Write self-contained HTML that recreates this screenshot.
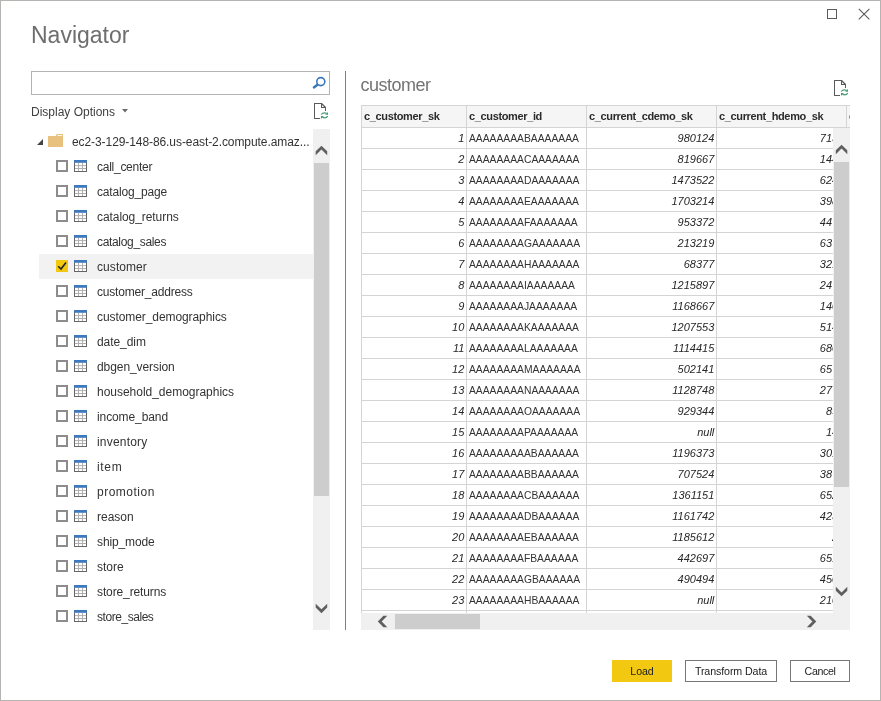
<!DOCTYPE html><html><head><meta charset="utf-8"><title>Navigator</title><style>
*{box-sizing:border-box;margin:0;padding:0}
html,body{width:881px;height:701px;overflow:hidden;background:#fff}
body{font-family:"Liberation Sans",sans-serif;color:#333;position:relative;font-size:12px}
.abs{position:absolute}
#win{position:absolute;left:0;top:0;width:881px;height:701px;border:1px solid #b6b4b1}
.title{position:absolute;left:31px;top:20px;font-size:23px;color:#6e6e6e;line-height:30px}
.search{position:absolute;left:31px;top:71px;width:299px;height:24px;border:1px solid #b3b3b3;background:#fff}
.dispopt{position:absolute;left:31px;top:105px;font-size:12px;line-height:15px;color:#404040}
.tree-row{position:absolute;left:39px;width:274px;height:25px}
.tree-row.sel{background:#f2f2f2}
.tree-row .cb{position:absolute;left:17px;top:6px;width:12px;height:12px;border:2px solid #8c8c8c;background:#fff}
.tree-row.sel .cb{border:none;background:#f2c811}
.tree-row .lbl{position:absolute;left:58px;top:6px;font-size:12px;line-height:15px;color:#333;white-space:nowrap}
.tree-row svg.ti{position:absolute;left:35px;top:6px}
.vsb{position:absolute;background:#f0f0f0}
.thumb{position:absolute;background:#cdcdcd}
.divider{position:absolute;left:345px;top:71px;width:1px;height:559px;background:#7f7f7f}
.ptitle{position:absolute;left:360.6px;top:73px;font-size:18px;letter-spacing:-0.5px;line-height:24px;color:#747474}
.grid{position:absolute;left:361px;top:105px;width:489px;height:508px;overflow:hidden;border-left:1px solid #d4d4d4;border-top:1px solid #d4d4d4}
.grid .r{position:absolute;left:0;height:21px;width:600px}
.grid .c{position:absolute;top:0;height:21px;border-right:1px solid #d4d4d4;border-bottom:1px solid #d4d4d4;font-size:11px;line-height:20px;white-space:nowrap;overflow:hidden;color:#333}
.grid .h,.grid .h .c{height:22px}
.grid .h .c{background:#f5f5f5;line-height:20px;font-weight:bold;font-size:11px;letter-spacing:-0.36px;padding-left:2px;color:#2b2b2b}
.grid .c1{left:0;width:105px;text-align:right;padding-right:1.7px;font-style:italic;color:#262626}
.grid .c2{left:105px;width:120px;padding-left:2px;font-size:10.3px;line-height:22px}
.grid .c3{left:225px;width:130px;text-align:right;padding-right:1.7px;font-style:italic;color:#262626}
.grid .c4{left:355px;width:130px;text-align:right;font-style:italic;color:#262626}
.grid .c5{left:485px;width:100px}
.grid .h .c1,.grid .h .c3,.grid .h .c4{text-align:left;font-style:normal;padding-right:0}
.btn{position:absolute;top:660px;height:22px;border:1px solid #767676;background:#fff;font-size:10.67px;letter-spacing:-0.1px;line-height:20px;text-align:center;color:#222}
</style></head><body>
<div id="root" style="position:absolute;left:0;top:0;width:881px;height:701px;will-change:transform">
<div id="win"></div>
<svg class="abs" style="left:822px;top:5px" width="54" height="20" viewBox="0 0 54 20"><rect x="5.5" y="4.5" width="9" height="9" fill="none" stroke="#5a5a5a" stroke-width="1"/><path d="M36.8 3.8 L47.4 14.4 M47.4 3.8 L36.8 14.4" stroke="#5a5a5a" stroke-width="1.1" fill="none"/></svg>
<div class="title">Navigator</div>
<div class="search"></div>
<svg class="abs" style="left:311px;top:75px" width="16" height="16" viewBox="0 0 16 16"><circle cx="9.8" cy="6.6" r="4" fill="none" stroke="#3a76b8" stroke-width="1.6"/><path d="M6.8 9.5 L2.2 13" stroke="#3a76b8" stroke-width="2.5"/></svg>
<div class="dispopt">Display Options</div>
<svg class="abs" style="left:121px;top:108px" width="8" height="6" viewBox="0 0 8 6"><path d="M1 1 L7 1 L4 4.5 Z" fill="#6a6a6a"/></svg>
<svg class="abs" style="left:311px;top:102px" width="19" height="19" viewBox="0 0 19 19"><path d="M9 16.5 H3.5 V1.5 H10.5 V5.5 H14.5 V9" fill="none" stroke="#5a5a5a" stroke-width="1" shape-rendering="crispEdges"/><path d="M10.5 1.5 L14.5 5.5" fill="none" stroke="#5a5a5a" stroke-width="1.3"/><path d="M10.2 12.5 Q12.2 9.9 15.6 11.4 M16.8 14.2 Q14.8 16.8 11.4 15.3" fill="none" stroke="#459a76" stroke-width="1.2"/><path d="M17 9.9 V12.7 H14.2 Z M10 14.1 H12.8 L10 16.9 Z" fill="#459a76"/></svg>
<svg class="abs" style="left:831px;top:79px" width="19" height="19" viewBox="0 0 19 19"><path d="M9 16.5 H3.5 V1.5 H10.5 V5.5 H14.5 V9" fill="none" stroke="#5a5a5a" stroke-width="1" shape-rendering="crispEdges"/><path d="M10.5 1.5 L14.5 5.5" fill="none" stroke="#5a5a5a" stroke-width="1.3"/><path d="M10.2 12.5 Q12.2 9.9 15.6 11.4 M16.8 14.2 Q14.8 16.8 11.4 15.3" fill="none" stroke="#459a76" stroke-width="1.2"/><path d="M17 9.9 V12.7 H14.2 Z M10 14.1 H12.8 L10 16.9 Z" fill="#459a76"/></svg>
<svg class="abs" style="left:36px;top:138px" width="8" height="8" viewBox="0 0 8 8"><path d="M7 1 V7 H1 Z" fill="#444"/></svg>
<svg class="abs" style="left:47px;top:133px" width="17" height="15" viewBox="0 0 17 15"><path d="M1 3 H8.6 L9.8 1 H16 V14 H1 Z" fill="#e9c17e"/><rect x="10.6" y="2" width="4.4" height="1" fill="#fff"/></svg>
<div class="abs" style="left:72px;top:135px;font-size:12px;letter-spacing:-0.08px;line-height:15px;color:#333;white-space:nowrap">ec2-3-129-148-86.us-east-2.compute.amaz...</div>
<div class="tree-row" style="top:154px"><div class="cb"></div><svg class="ti" width="13" height="12" viewBox="0 0 13 12"><rect x="0" y="0" width="13" height="12" fill="#fff"/><path d="M4.5 2.8 V11 M8.5 2.8 V11 M1 5.6 H12 M1 8.5 H12" stroke="#b0b0b0" stroke-width="1" fill="none"/><path d="M0.5 2 V11.5 H12.5 V2" stroke="#666" stroke-width="1" fill="none" shape-rendering="crispEdges"/><rect x="0" y="0" width="13" height="2.8" fill="#3f79bd"/></svg><div class="lbl" style="letter-spacing:-0.26px">call_center</div></div>
<div class="tree-row" style="top:179px"><div class="cb"></div><svg class="ti" width="13" height="12" viewBox="0 0 13 12"><rect x="0" y="0" width="13" height="12" fill="#fff"/><path d="M4.5 2.8 V11 M8.5 2.8 V11 M1 5.6 H12 M1 8.5 H12" stroke="#b0b0b0" stroke-width="1" fill="none"/><path d="M0.5 2 V11.5 H12.5 V2" stroke="#666" stroke-width="1" fill="none" shape-rendering="crispEdges"/><rect x="0" y="0" width="13" height="2.8" fill="#3f79bd"/></svg><div class="lbl" style="letter-spacing:-0.18px">catalog_page</div></div>
<div class="tree-row" style="top:204px"><div class="cb"></div><svg class="ti" width="13" height="12" viewBox="0 0 13 12"><rect x="0" y="0" width="13" height="12" fill="#fff"/><path d="M4.5 2.8 V11 M8.5 2.8 V11 M1 5.6 H12 M1 8.5 H12" stroke="#b0b0b0" stroke-width="1" fill="none"/><path d="M0.5 2 V11.5 H12.5 V2" stroke="#666" stroke-width="1" fill="none" shape-rendering="crispEdges"/><rect x="0" y="0" width="13" height="2.8" fill="#3f79bd"/></svg><div class="lbl" style="letter-spacing:-0.07px">catalog_returns</div></div>
<div class="tree-row" style="top:229px"><div class="cb"></div><svg class="ti" width="13" height="12" viewBox="0 0 13 12"><rect x="0" y="0" width="13" height="12" fill="#fff"/><path d="M4.5 2.8 V11 M8.5 2.8 V11 M1 5.6 H12 M1 8.5 H12" stroke="#b0b0b0" stroke-width="1" fill="none"/><path d="M0.5 2 V11.5 H12.5 V2" stroke="#666" stroke-width="1" fill="none" shape-rendering="crispEdges"/><rect x="0" y="0" width="13" height="2.8" fill="#3f79bd"/></svg><div class="lbl" style="letter-spacing:-0.33px">catalog_sales</div></div>
<div class="tree-row sel" style="top:254px"><div class="cb"></div><svg class="abs" style="left:17px;top:6px" width="12" height="12" viewBox="0 0 12 12"><path d="M2.2 6.2 L5 9 L10 2.6" fill="none" stroke="#20242c" stroke-width="1.6"/></svg><svg class="ti" width="13" height="12" viewBox="0 0 13 12"><rect x="0" y="0" width="13" height="12" fill="#fff"/><path d="M4.5 2.8 V11 M8.5 2.8 V11 M1 5.6 H12 M1 8.5 H12" stroke="#b0b0b0" stroke-width="1" fill="none"/><path d="M0.5 2 V11.5 H12.5 V2" stroke="#666" stroke-width="1" fill="none" shape-rendering="crispEdges"/><rect x="0" y="0" width="13" height="2.8" fill="#3f79bd"/></svg><div class="lbl" style="letter-spacing:0.07px">customer</div></div>
<div class="tree-row" style="top:279px"><div class="cb"></div><svg class="ti" width="13" height="12" viewBox="0 0 13 12"><rect x="0" y="0" width="13" height="12" fill="#fff"/><path d="M4.5 2.8 V11 M8.5 2.8 V11 M1 5.6 H12 M1 8.5 H12" stroke="#b0b0b0" stroke-width="1" fill="none"/><path d="M0.5 2 V11.5 H12.5 V2" stroke="#666" stroke-width="1" fill="none" shape-rendering="crispEdges"/><rect x="0" y="0" width="13" height="2.8" fill="#3f79bd"/></svg><div class="lbl" style="letter-spacing:-0.2px">customer_address</div></div>
<div class="tree-row" style="top:304px"><div class="cb"></div><svg class="ti" width="13" height="12" viewBox="0 0 13 12"><rect x="0" y="0" width="13" height="12" fill="#fff"/><path d="M4.5 2.8 V11 M8.5 2.8 V11 M1 5.6 H12 M1 8.5 H12" stroke="#b0b0b0" stroke-width="1" fill="none"/><path d="M0.5 2 V11.5 H12.5 V2" stroke="#666" stroke-width="1" fill="none" shape-rendering="crispEdges"/><rect x="0" y="0" width="13" height="2.8" fill="#3f79bd"/></svg><div class="lbl" style="letter-spacing:-0.08px">customer_demographics</div></div>
<div class="tree-row" style="top:329px"><div class="cb"></div><svg class="ti" width="13" height="12" viewBox="0 0 13 12"><rect x="0" y="0" width="13" height="12" fill="#fff"/><path d="M4.5 2.8 V11 M8.5 2.8 V11 M1 5.6 H12 M1 8.5 H12" stroke="#b0b0b0" stroke-width="1" fill="none"/><path d="M0.5 2 V11.5 H12.5 V2" stroke="#666" stroke-width="1" fill="none" shape-rendering="crispEdges"/><rect x="0" y="0" width="13" height="2.8" fill="#3f79bd"/></svg><div class="lbl" style="letter-spacing:-0.07px">date_dim</div></div>
<div class="tree-row" style="top:354px"><div class="cb"></div><svg class="ti" width="13" height="12" viewBox="0 0 13 12"><rect x="0" y="0" width="13" height="12" fill="#fff"/><path d="M4.5 2.8 V11 M8.5 2.8 V11 M1 5.6 H12 M1 8.5 H12" stroke="#b0b0b0" stroke-width="1" fill="none"/><path d="M0.5 2 V11.5 H12.5 V2" stroke="#666" stroke-width="1" fill="none" shape-rendering="crispEdges"/><rect x="0" y="0" width="13" height="2.8" fill="#3f79bd"/></svg><div class="lbl" style="letter-spacing:-0.08px">dbgen_version</div></div>
<div class="tree-row" style="top:379px"><div class="cb"></div><svg class="ti" width="13" height="12" viewBox="0 0 13 12"><rect x="0" y="0" width="13" height="12" fill="#fff"/><path d="M4.5 2.8 V11 M8.5 2.8 V11 M1 5.6 H12 M1 8.5 H12" stroke="#b0b0b0" stroke-width="1" fill="none"/><path d="M0.5 2 V11.5 H12.5 V2" stroke="#666" stroke-width="1" fill="none" shape-rendering="crispEdges"/><rect x="0" y="0" width="13" height="2.8" fill="#3f79bd"/></svg><div class="lbl" style="letter-spacing:-0.02px">household_demographics</div></div>
<div class="tree-row" style="top:404px"><div class="cb"></div><svg class="ti" width="13" height="12" viewBox="0 0 13 12"><rect x="0" y="0" width="13" height="12" fill="#fff"/><path d="M4.5 2.8 V11 M8.5 2.8 V11 M1 5.6 H12 M1 8.5 H12" stroke="#b0b0b0" stroke-width="1" fill="none"/><path d="M0.5 2 V11.5 H12.5 V2" stroke="#666" stroke-width="1" fill="none" shape-rendering="crispEdges"/><rect x="0" y="0" width="13" height="2.8" fill="#3f79bd"/></svg><div class="lbl" style="letter-spacing:-0.1px">income_band</div></div>
<div class="tree-row" style="top:429px"><div class="cb"></div><svg class="ti" width="13" height="12" viewBox="0 0 13 12"><rect x="0" y="0" width="13" height="12" fill="#fff"/><path d="M4.5 2.8 V11 M8.5 2.8 V11 M1 5.6 H12 M1 8.5 H12" stroke="#b0b0b0" stroke-width="1" fill="none"/><path d="M0.5 2 V11.5 H12.5 V2" stroke="#666" stroke-width="1" fill="none" shape-rendering="crispEdges"/><rect x="0" y="0" width="13" height="2.8" fill="#3f79bd"/></svg><div class="lbl" style="letter-spacing:0.19px">inventory</div></div>
<div class="tree-row" style="top:454px"><div class="cb"></div><svg class="ti" width="13" height="12" viewBox="0 0 13 12"><rect x="0" y="0" width="13" height="12" fill="#fff"/><path d="M4.5 2.8 V11 M8.5 2.8 V11 M1 5.6 H12 M1 8.5 H12" stroke="#b0b0b0" stroke-width="1" fill="none"/><path d="M0.5 2 V11.5 H12.5 V2" stroke="#666" stroke-width="1" fill="none" shape-rendering="crispEdges"/><rect x="0" y="0" width="13" height="2.8" fill="#3f79bd"/></svg><div class="lbl" style="letter-spacing:0.67px">item</div></div>
<div class="tree-row" style="top:479px"><div class="cb"></div><svg class="ti" width="13" height="12" viewBox="0 0 13 12"><rect x="0" y="0" width="13" height="12" fill="#fff"/><path d="M4.5 2.8 V11 M8.5 2.8 V11 M1 5.6 H12 M1 8.5 H12" stroke="#b0b0b0" stroke-width="1" fill="none"/><path d="M0.5 2 V11.5 H12.5 V2" stroke="#666" stroke-width="1" fill="none" shape-rendering="crispEdges"/><rect x="0" y="0" width="13" height="2.8" fill="#3f79bd"/></svg><div class="lbl" style="letter-spacing:0.5px">promotion</div></div>
<div class="tree-row" style="top:504px"><div class="cb"></div><svg class="ti" width="13" height="12" viewBox="0 0 13 12"><rect x="0" y="0" width="13" height="12" fill="#fff"/><path d="M4.5 2.8 V11 M8.5 2.8 V11 M1 5.6 H12 M1 8.5 H12" stroke="#b0b0b0" stroke-width="1" fill="none"/><path d="M0.5 2 V11.5 H12.5 V2" stroke="#666" stroke-width="1" fill="none" shape-rendering="crispEdges"/><rect x="0" y="0" width="13" height="2.8" fill="#3f79bd"/></svg><div class="lbl" style="letter-spacing:0.0px">reason</div></div>
<div class="tree-row" style="top:529px"><div class="cb"></div><svg class="ti" width="13" height="12" viewBox="0 0 13 12"><rect x="0" y="0" width="13" height="12" fill="#fff"/><path d="M4.5 2.8 V11 M8.5 2.8 V11 M1 5.6 H12 M1 8.5 H12" stroke="#b0b0b0" stroke-width="1" fill="none"/><path d="M0.5 2 V11.5 H12.5 V2" stroke="#666" stroke-width="1" fill="none" shape-rendering="crispEdges"/><rect x="0" y="0" width="13" height="2.8" fill="#3f79bd"/></svg><div class="lbl" style="letter-spacing:-0.12px">ship_mode</div></div>
<div class="tree-row" style="top:554px"><div class="cb"></div><svg class="ti" width="13" height="12" viewBox="0 0 13 12"><rect x="0" y="0" width="13" height="12" fill="#fff"/><path d="M4.5 2.8 V11 M8.5 2.8 V11 M1 5.6 H12 M1 8.5 H12" stroke="#b0b0b0" stroke-width="1" fill="none"/><path d="M0.5 2 V11.5 H12.5 V2" stroke="#666" stroke-width="1" fill="none" shape-rendering="crispEdges"/><rect x="0" y="0" width="13" height="2.8" fill="#3f79bd"/></svg><div class="lbl" style="letter-spacing:0.0px">store</div></div>
<div class="tree-row" style="top:579px"><div class="cb"></div><svg class="ti" width="13" height="12" viewBox="0 0 13 12"><rect x="0" y="0" width="13" height="12" fill="#fff"/><path d="M4.5 2.8 V11 M8.5 2.8 V11 M1 5.6 H12 M1 8.5 H12" stroke="#b0b0b0" stroke-width="1" fill="none"/><path d="M0.5 2 V11.5 H12.5 V2" stroke="#666" stroke-width="1" fill="none" shape-rendering="crispEdges"/><rect x="0" y="0" width="13" height="2.8" fill="#3f79bd"/></svg><div class="lbl" style="letter-spacing:-0.12px">store_returns</div></div>
<div class="tree-row" style="top:604px"><div class="cb"></div><svg class="ti" width="13" height="12" viewBox="0 0 13 12"><rect x="0" y="0" width="13" height="12" fill="#fff"/><path d="M4.5 2.8 V11 M8.5 2.8 V11 M1 5.6 H12 M1 8.5 H12" stroke="#b0b0b0" stroke-width="1" fill="none"/><path d="M0.5 2 V11.5 H12.5 V2" stroke="#666" stroke-width="1" fill="none" shape-rendering="crispEdges"/><rect x="0" y="0" width="13" height="2.8" fill="#3f79bd"/></svg><div class="lbl" style="letter-spacing:-0.45px">store_sales</div></div>
<div class="vsb" style="left:313px;top:129px;width:17px;height:501px"></div>
<div class="thumb" style="left:314px;top:163px;width:15px;height:333px"></div>
<div class="divider"></div>
<div class="ptitle">customer</div>
<div class="grid"><div class="r h" style="top:0"><div class="c c1">c_customer_sk</div><div class="c c2">c_customer_id</div><div class="c c3">c_current_cdemo_sk</div><div class="c c4">c_current_hdemo_sk</div><div class="c c5">c_current_addr_sk</div></div><div class="r" style="top:22px"><div class="c c1">1</div><div class="c c2">AAAAAAAABAAAAAAA</div><div class="c c3">980124</div><div class="c c4"><span style="position:absolute;right:1.7px">7135</span></div><div class="c c5"></div></div><div class="r" style="top:43px"><div class="c c1">2</div><div class="c c2">AAAAAAAACAAAAAAA</div><div class="c c3">819667</div><div class="c c4"><span style="position:absolute;right:1.7px">1444</span></div><div class="c c5"></div></div><div class="r" style="top:64px"><div class="c c1">3</div><div class="c c2">AAAAAAAADAAAAAAA</div><div class="c c3">1473522</div><div class="c c4"><span style="position:absolute;right:1.7px">6247</span></div><div class="c c5"></div></div><div class="r" style="top:85px"><div class="c c1">4</div><div class="c c2">AAAAAAAAEAAAAAAA</div><div class="c c3">1703214</div><div class="c c4"><span style="position:absolute;right:1.7px">3986</span></div><div class="c c5"></div></div><div class="r" style="top:106px"><div class="c c1">5</div><div class="c c2">AAAAAAAAFAAAAAAA</div><div class="c c3">953372</div><div class="c c4"><span style="position:absolute;right:1.7px">4470</span></div><div class="c c5"></div></div><div class="r" style="top:127px"><div class="c c1">6</div><div class="c c2">AAAAAAAAGAAAAAAA</div><div class="c c3">213219</div><div class="c c4"><span style="position:absolute;right:1.7px">6374</span></div><div class="c c5"></div></div><div class="r" style="top:148px"><div class="c c1">7</div><div class="c c2">AAAAAAAAHAAAAAAA</div><div class="c c3">68377</div><div class="c c4"><span style="position:absolute;right:1.7px">3219</span></div><div class="c c5"></div></div><div class="r" style="top:169px"><div class="c c1">8</div><div class="c c2">AAAAAAAAIAAAAAAA</div><div class="c c3">1215897</div><div class="c c4"><span style="position:absolute;right:1.7px">2471</span></div><div class="c c5"></div></div><div class="r" style="top:190px"><div class="c c1">9</div><div class="c c2">AAAAAAAAJAAAAAAA</div><div class="c c3">1168667</div><div class="c c4"><span style="position:absolute;right:1.7px">1404</span></div><div class="c c5"></div></div><div class="r" style="top:211px"><div class="c c1">10</div><div class="c c2">AAAAAAAAKAAAAAAA</div><div class="c c3">1207553</div><div class="c c4"><span style="position:absolute;right:1.7px">5143</span></div><div class="c c5"></div></div><div class="r" style="top:232px"><div class="c c1">11</div><div class="c c2">AAAAAAAALAAAAAAA</div><div class="c c3">1114415</div><div class="c c4"><span style="position:absolute;right:1.7px">6807</span></div><div class="c c5"></div></div><div class="r" style="top:253px"><div class="c c1">12</div><div class="c c2">AAAAAAAAMAAAAAAA</div><div class="c c3">502141</div><div class="c c4"><span style="position:absolute;right:1.7px">6577</span></div><div class="c c5"></div></div><div class="r" style="top:274px"><div class="c c1">13</div><div class="c c2">AAAAAAAANAAAAAAA</div><div class="c c3">1128748</div><div class="c c4"><span style="position:absolute;right:1.7px">2777</span></div><div class="c c5"></div></div><div class="r" style="top:295px"><div class="c c1">14</div><div class="c c2">AAAAAAAAOAAAAAAA</div><div class="c c3">929344</div><div class="c c4"><span style="position:absolute;right:1.7px">898</span></div><div class="c c5"></div></div><div class="r" style="top:316px"><div class="c c1">15</div><div class="c c2">AAAAAAAAPAAAAAAA</div><div class="c c3">null</div><div class="c c4"><span style="position:absolute;right:1.7px">140</span></div><div class="c c5"></div></div><div class="r" style="top:337px"><div class="c c1">16</div><div class="c c2">AAAAAAAAABAAAAAA</div><div class="c c3">1196373</div><div class="c c4"><span style="position:absolute;right:1.7px">3014</span></div><div class="c c5"></div></div><div class="r" style="top:358px"><div class="c c1">17</div><div class="c c2">AAAAAAAABBAAAAAA</div><div class="c c3">707524</div><div class="c c4"><span style="position:absolute;right:1.7px">3876</span></div><div class="c c5"></div></div><div class="r" style="top:379px"><div class="c c1">18</div><div class="c c2">AAAAAAAACBAAAAAA</div><div class="c c3">1361151</div><div class="c c4"><span style="position:absolute;right:1.7px">6520</span></div><div class="c c5"></div></div><div class="r" style="top:400px"><div class="c c1">19</div><div class="c c2">AAAAAAAADBAAAAAA</div><div class="c c3">1161742</div><div class="c c4"><span style="position:absolute;right:1.7px">4238</span></div><div class="c c5"></div></div><div class="r" style="top:421px"><div class="c c1">20</div><div class="c c2">AAAAAAAAEBAAAAAA</div><div class="c c3">1185612</div><div class="c c4"><span style="position:absolute;right:1.7px">27</span></div><div class="c c5"></div></div><div class="r" style="top:442px"><div class="c c1">21</div><div class="c c2">AAAAAAAAFBAAAAAA</div><div class="c c3">442697</div><div class="c c4"><span style="position:absolute;right:1.7px">6510</span></div><div class="c c5"></div></div><div class="r" style="top:463px"><div class="c c1">22</div><div class="c c2">AAAAAAAAGBAAAAAA</div><div class="c c3">490494</div><div class="c c4"><span style="position:absolute;right:1.7px">4508</span></div><div class="c c5"></div></div><div class="r" style="top:484px"><div class="c c1">23</div><div class="c c2">AAAAAAAAHBAAAAAA</div><div class="c c3">null</div><div class="c c4"><span style="position:absolute;right:1.7px">2107</span></div><div class="c c5"></div></div><div class="r" style="top:505px"><div class="c c1"></div><div class="c c2"></div><div class="c c3"></div><div class="c c4"></div><div class="c c5"></div></div></div>
<div class="vsb" style="left:833px;top:128px;width:17px;height:502px"></div>
<div class="thumb" style="left:834px;top:162px;width:15px;height:325px"></div>
<div class="vsb" style="left:361px;top:613px;width:489px;height:17px"></div>
<div class="thumb" style="left:395px;top:614px;width:85px;height:15px"></div>
<svg class="abs" style="left:0;top:0" width="881" height="701" viewBox="0 0 881 701"><polygon points="321.45,145.70 327.20,151.30 327.20,155.20 321.45,149.60 315.70,155.20 315.70,151.30" fill="#5f5f5f"/><polygon points="315.70,603.70 321.45,609.30 327.20,603.70 327.20,607.60 321.45,613.20 315.70,607.60" fill="#5f5f5f"/><polygon points="841.55,144.70 847.30,150.30 847.30,154.20 841.55,148.60 835.80,154.20 835.80,150.30" fill="#5f5f5f"/><polygon points="835.80,586.80 841.55,592.40 847.30,586.80 847.30,590.70 841.55,596.30 835.80,590.70" fill="#5f5f5f"/><polygon points="377.80,621.55 383.40,615.80 387.30,615.80 381.70,621.55 387.30,627.30 383.40,627.30" fill="#5f5f5f"/><polygon points="816.30,621.55 810.70,615.80 806.80,615.80 812.40,621.55 806.80,627.30 810.70,627.30" fill="#5f5f5f"/></svg>
<div class="btn" style="left:612px;width:60px;background:#f2c811;border-color:#f2c811">Load</div>
<div class="btn" style="left:685px;width:92px">Transform Data</div>
<div class="btn" style="left:790px;width:60px;letter-spacing:-0.4px">Cancel</div>
</div></body></html>
